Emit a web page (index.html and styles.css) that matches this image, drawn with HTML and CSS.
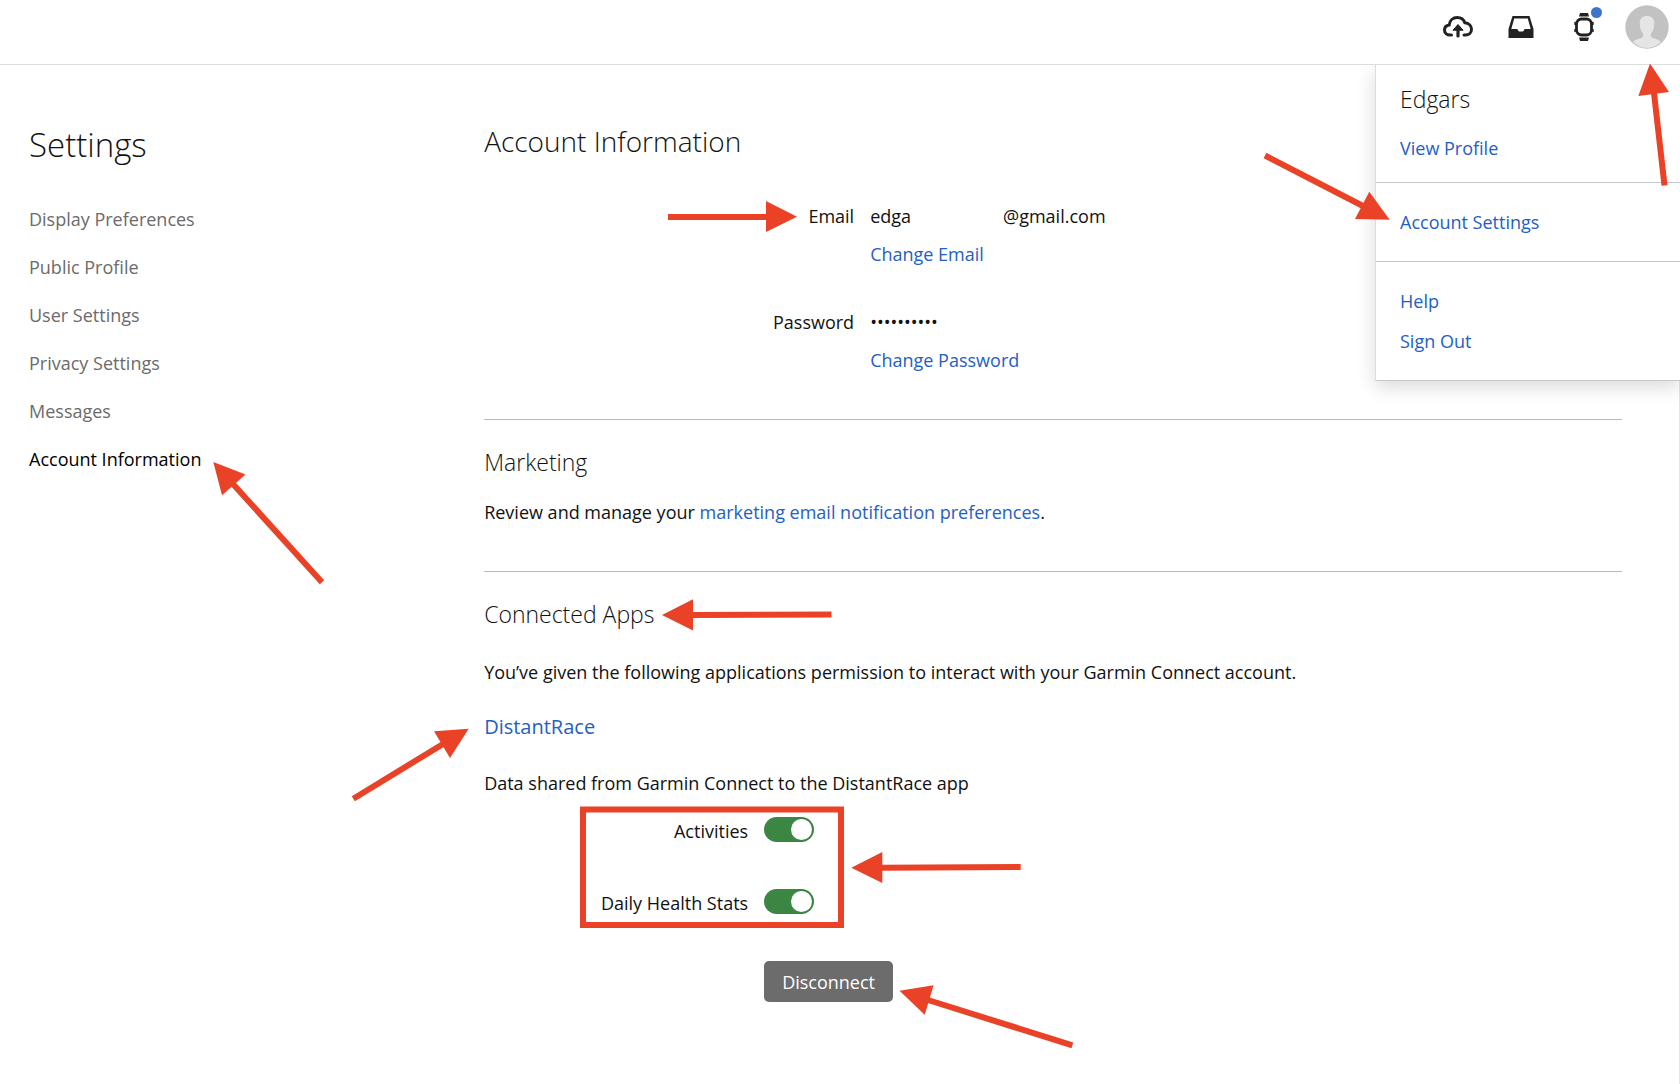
FILE: index.html
```html
<!DOCTYPE html>
<html lang="en">
<head>
    <meta charset="UTF-8">
    <meta name="viewport" content="width=device-width, initial-scale=1.0">
    <title>Account Information</title>
    <link rel="stylesheet" href="styles.css">
</head>
<body>
    <header class="topbar">
        <button class="icon-btn" type="button" aria-label="Upload">
            <svg width="32" height="24" viewBox="0 0 32 24" fill="none" stroke="#222" stroke-width="3" stroke-linecap="round">
                <path d="M9.5 20H8.2C4.800 20 2.500 17.800 2.500 15c0-2.700 1.900-4.700 4.700-5.100C7.600 5.500 11 2.500 15.300 2.500c3.500 0 6.400 2 7.500 5.200 3.800.4 6.700 3 6.700 6.500 0 3.300-2.500 5.800-6 5.800h-1.500"/>
                <path d="M16 21V12" stroke-width="3.200"/>
                <path d="M11.200 15L16 9.500l4.800 5.500z" fill="#222" stroke-width="1"/>
            </svg>
        </button>
        <button class="icon-btn" type="button" aria-label="Inbox">
            <svg width="26" height="22" viewBox="0 0 26 22">
                <path fill="#222" fill-rule="evenodd" d="M4.500 0h17L25.500 13v9H.5v-9zM6.200 2.500L3.300 13h5.500c.8 0 .9.600 1.200 1.300.4.900 1 1.200 1.800 1.200h2.400c.8 0 1.400-.3 1.800-1.200.3-.7.4-1.300 1.200-1.300h5.500L19.800 2.500z"/>
            </svg>
        </button>
        <button class="icon-btn" type="button" aria-label="Devices">
            <svg width="20" height="28" viewBox="0 0 20 28">
                <path fill="#222" d="M6 0h8l1 3.500H5zM5 24.500h10L14 28H6z"/>
                <rect x="2.500" y="6" width="15" height="16" rx="5" fill="none" stroke="#222" stroke-width="2.800"/>
                <path fill="#222" d="M.3 9h1.500v3H.3zM.3 16h1.500v3H.3zM18.200 9h1.500v3h-1.500zM18.200 16h1.500v3h-1.500z"/>
            </svg>
            <span class="dot"></span>
        </button>
        <button class="icon-btn" type="button" aria-label="Profile">
            <svg width="44" height="44" viewBox="0 0 44 44">
                <circle cx="22" cy="22" r="21.700" fill="#c2c2c2"/>
                <path fill="#e5e5e5" d="M22 11c4.600 0 7.300 2.600 7.300 7.200 0 4.800-1.300 8.300-3.400 10.300v2.300c0 1.200.6 1.700 1.800 2.100 3.800 1.200 6.500 2.100 8.500 3.900A21 21 0 0 1 22 43a21 21 0 0 1-14.200-6.200c2-1.800 4.700-2.700 8.500-3.900 1.200-.4 1.800-.9 1.800-2.100v-2.300c-2.100-2-3.400-5.500-3.400-10.300C14.700 13.600 17.400 11 22 11z"/>
            </svg>
        </button>

        <div class="menu">
            <div class="menu-group">
                <p class="menu-name">Edgars</p>
                <a href="#">View Profile</a>
            </div>
            <div class="menu-group">
                <a href="#">Account Settings</a>
            </div>
            <div class="menu-group">
                <a href="#">Help</a>
                <a href="#">Sign Out</a>
            </div>
        </div>
    </header>

    <div class="page">
        <aside class="sidebar">
            <h1>Settings</h1>
            <nav class="nav">
                <a href="#">Display Preferences</a>
                <a href="#">Public Profile</a>
                <a href="#">User Settings</a>
                <a href="#">Privacy Settings</a>
                <a href="#">Messages</a>
                <a href="#" class="active">Account Information</a>
            </nav>
        </aside>

        <main>
            <h2>Account Information</h2>
            <dl class="info">
                <dt>Email</dt>
                <dd>
                    <span class="email"><span>edga</span><span>@gmail.com</span></span>
                    <a href="#">Change Email</a>
                </dd>
                <dt>Password</dt>
                <dd>
                    <span>••••••••••</span>
                    <a href="#">Change Password</a>
                </dd>
            </dl>

            <section>
                <h3>Marketing</h3>
                <p>Review and manage your <a href="#">marketing email notification preferences</a>.</p>
            </section>

            <section class="apps">
                <h3>Connected Apps</h3>
                <p>You’ve given the following applications permission to interact with your Garmin Connect account.</p>
                <a href="#" class="app-name">DistantRace</a>
                <p>Data shared from Garmin Connect to the DistantRace app</p>
                <div class="sharing">
                    <label for="activities">Activities</label>
                    <input type="checkbox" class="toggle" id="activities" checked>
                    <label for="health">Daily Health Stats</label>
                    <input type="checkbox" class="toggle" id="health" checked>
                    <button type="button" class="disconnect">Disconnect</button>
                </div>
            </section>
        </main>
    </div>

    <!-- Red arrows and box pointing out each step -->
    <svg class="marks" width="1680" height="1084" viewBox="0 0 1680 1084" aria-hidden="true">
        <g fill="none" stroke="#ea4226" stroke-width="6">
            <path d="M1654 93L1664.500 185.500"/>
            <path d="M1363 206L1265 155.500"/>
            <path d="M233 484L322 582.300"/>
            <path d="M767 217H668"/>
            <path d="M692 615L831.500 614.500"/>
            <path d="M443 744L353.300 798.700"/>
            <path d="M881 867.700L1020.700 867"/>
            <path d="M928 1000L1072.400 1045.300"/>
            <rect x="583" y="809.500" width="258" height="115.500"/>
        </g>
        <g fill="#ea4226">
            <path d="M1650 63.500L1638.300 96 1669 92z"/>
            <path d="M1389.700 219.700L1369.300 191.700 1355 219z"/>
            <path d="M213.300 462L245.500 474.500 222 495.300z"/>
            <path d="M797 216.700L766 201V232z"/>
            <path d="M662 615L693 599.300V630.500z"/>
            <path d="M468.700 728.700L434 731.300 450 758z"/>
            <path d="M851.300 867.700L882.300 852V883z"/>
            <path d="M899.500 990.700L933.600 985.300 924.700 1014.700z"/>
        </g>
    </svg>
</body>
</html>
```
FILE: styles.css
```css
* {
    box-sizing: border-box;
}

body {
    margin: 0;
    min-height: 100vh;
    display: flex;
    flex-direction: column;
    position: relative;
    overflow-x: hidden;
    font-family: "Open Sans", "Noto Sans", sans-serif;
    font-size: 18px;
    line-height: 24px;
    color: #111;
    background: #fff;
}

h1, h2, h3, p, dl, dd {
    margin: 0;
}

h1, h2, h3 {
    font-weight: 300;
}

h1 {
    font-size: 33px;
    line-height: 46px;
}

h2 {
    font-size: 28px;
    line-height: 38px;
}

h3 {
    font-size: 23px;
    line-height: 32px;
}

a {
    color: #2360c5;
    text-decoration: none;
}

a:hover {
    text-decoration: underline;
}

button {
    font: inherit;
    border: none;
    cursor: pointer;
}

/* Top bar */
.topbar {
    position: relative;
    display: flex;
    justify-content: flex-end;
    gap: 19px;
    height: 65px;
    padding: 5px 11px;
    border-bottom: 1px solid #ddd;
}

.icon-btn {
    position: relative;
    display: flex;
    align-items: center;
    justify-content: center;
    width: 44px;
    height: 44px;
    padding: 0;
    background: none;
}

.dot {
    position: absolute;
    top: 2px;
    right: 4px;
    width: 11px;
    height: 11px;
    border-radius: 50%;
    background: #3f73cc;
}

/* Profile menu */
.menu {
    position: absolute;
    top: 65px;
    right: 0;
    width: 305px;
    background: #fff;
    border-left: 1px solid #ddd;
    box-shadow: 0 6px 18px rgba(0, 0, 0, 0.15);
    clip-path: inset(0 0 -40px -40px);
    z-index: 1;
}

.menu-group {
    display: flex;
    flex-direction: column;
    gap: 16px;
    padding: 27px 24px;
    border-bottom: 1px solid #c8c8c8;
}

.menu-group:first-child {
    gap: 21px;
    padding: 18px 24px 22px;
}

.menu-name {
    font-size: 23px;
    font-weight: 300;
    line-height: 32px;
}

/* Page */
.page {
    flex: 1;
    display: grid;
    grid-template-columns: 2fr 5fr;
    padding: 57px 57px 56px 29px;
    border-right: 1px solid #e4e4e4;
}

.nav {
    display: flex;
    flex-direction: column;
    gap: 24px;
    margin-top: 39px;
}

.nav a {
    color: #6b6b6b;
}

.nav .active {
    color: #000;
}

.info {
    display: grid;
    grid-template-columns: 370px 1fr;
    gap: 44px 16px;
    padding: 44px 0 47px;
}

.info dt {
    text-align: right;
}

.info dd {
    display: flex;
    flex-direction: column;
    align-items: flex-start;
    gap: 14px;
}

.email {
    display: flex;
    gap: 92px;
}

section {
    padding: 26px 0 47px;
    border-top: 1px solid #bbb;
}

section h3 {
    margin-bottom: 22px;
}

/* Connected apps */
.apps {
    padding-bottom: 0;
}

.apps h3 {
    margin-bottom: 30px;
}

.app-name {
    display: block;
    margin: 29px 0 30px;
    font-size: 20px;
    line-height: 28px;
}

.sharing {
    display: grid;
    grid-template-columns: 264px 1fr;
    gap: 46px 16px;
    margin-top: 22px;
}

.sharing label {
    padding-top: 2px;
    text-align: right;
}

.toggle {
    appearance: none;
    display: flex;
    align-items: center;
    width: 50px;
    height: 25px;
    margin: 0;
    padding: 2px;
    border-radius: 13px;
    background: #999;
    cursor: pointer;
}

.toggle::before {
    content: "";
    width: 21px;
    height: 21px;
    border-radius: 50%;
    background: #fff;
}

.toggle:checked {
    justify-content: flex-end;
    background: #3b8643;
}

.disconnect {
    grid-column: 2;
    justify-self: start;
    padding: 9px 18px 8px;
    border-radius: 5px;
    color: #fff;
    background: #6c6c6c;
}

/* Step markers */
.marks {
    position: absolute;
    top: 0;
    left: 0;
    z-index: 2;
    pointer-events: none;
}
```
